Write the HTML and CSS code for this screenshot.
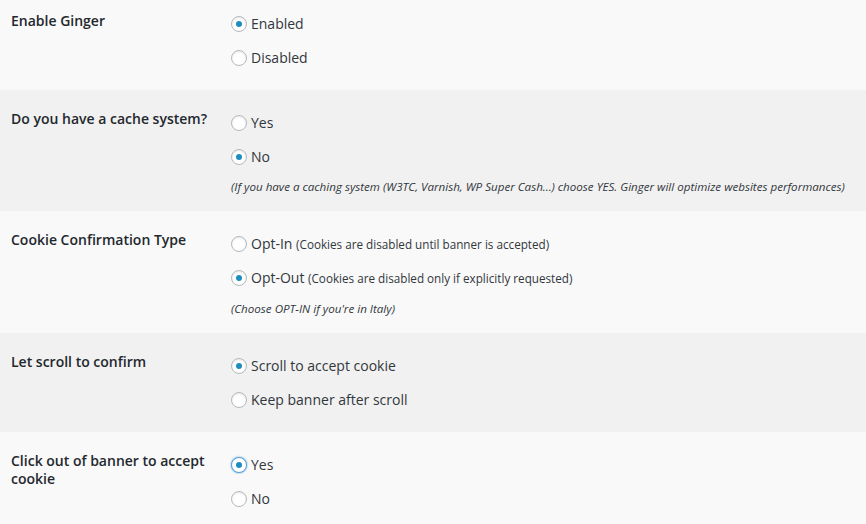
FILE: index.html
```html
<!DOCTYPE html>
<html>
<head>
<meta charset="utf-8">
<link rel="stylesheet" href="styles.css">
</head>
<body>
<div class="table">
  <div class="row odd first">
    <div class="th">Enable Ginger</div>
    <div class="td">
      <label class="opt"><input type="radio" name="a" checked><span>Enabled</span></label>
      <label class="opt"><input type="radio" name="a"><span>Disabled</span></label>
    </div>
  </div>
  <div class="row even">
    <div class="th">Do you have a cache system?</div>
    <div class="td">
      <label class="opt"><input type="radio" name="b"><span>Yes</span></label>
      <label class="opt"><input type="radio" name="b" checked><span>No</span></label>
      <p class="desc">(If you have a caching system (W3TC, Varnish, WP Super Cash...) choose YES. Ginger will optimize websites performances)</p>
    </div>
  </div>
  <div class="row odd">
    <div class="th">Cookie Confirmation Type</div>
    <div class="td">
      <label class="opt"><input type="radio" name="c"><span>Opt-In <small>(Cookies are disabled until banner is accepted)</small></span></label>
      <label class="opt"><input type="radio" name="c" checked><span>Opt-Out <small>(Cookies are disabled only if explicitly requested)</small></span></label>
      <p class="desc tall">(Choose OPT-IN if you're in Italy)</p>
    </div>
  </div>
  <div class="row even">
    <div class="th">Let scroll to confirm</div>
    <div class="td">
      <label class="opt"><input type="radio" name="d" checked><span>Scroll to accept cookie</span></label>
      <label class="opt"><input type="radio" name="d"><span>Keep banner after scroll</span></label>
    </div>
  </div>
  <div class="row odd">
    <div class="th">Click out of banner to accept cookie</div>
    <div class="td">
      <label class="opt"><input type="radio" name="e" class="focus" checked><span>Yes</span></label>
      <label class="opt"><input type="radio" name="e"><span>No</span></label>
    </div>
  </div>
</div>
</body>
</html>
```
FILE: styles.css
```css
html, body {
  margin: 0;
  padding: 0;
  background: #f9f9f9;
}
body {
  font-family: "Open Sans", "Liberation Sans", sans-serif;
  font-size: 14px;
  color: #444;
  overflow: hidden;
}
.row {
  display: flex;
  padding-left: 11px;
}
.odd { background: #f9f9f9; }
.even { background: #f1f1f1; }
.th {
  width: 200px;
  padding: 20px 10px 0 0;
  font-weight: 600;
  color: #23282d;
  line-height: 18px;
}
.td {
  padding: 16px 10px 15px 10px;
  display: flex;
  flex-direction: column;
}
.first .th { padding-top: 12px; }
.first .td { padding-top: 7px; }
.opt {
  height: 34px;
  display: flex;
  align-items: center;
  color: #32373c;
  line-height: 18px;
  white-space: nowrap;
}
.opt span { margin-left: 4px; }
.opt small { font-size: 11.7px; }
input[type=radio] {
  -webkit-appearance: none;
  appearance: none;
  margin: 0;
  width: 16px;
  height: 16px;
  border: 1px solid #b4b9be;
  border-radius: 50%;
  background: #fff;
  box-shadow: inset 0 1px 2px rgba(0,0,0,.1);
  box-sizing: border-box;
  display: flex;
  align-items: center;
  justify-content: center;
  flex: none;
}
input[type=radio]:checked::before {
  content: "";
  width: 6px;
  height: 6px;
  border-radius: 50%;
  background: #1e8cbe;
}
input[type=radio].focus {
  border-color: #5b9dd9;
  box-shadow: 0 0 2px rgba(30,140,190,.8);
}
.desc {
  margin: 4px 0 0 0;
  font-size: 11.6px;
  font-style: italic;
  line-height: 18px;
  color: #32373c;
  white-space: nowrap;
}
.desc.tall { margin-top: 5px; }
```
